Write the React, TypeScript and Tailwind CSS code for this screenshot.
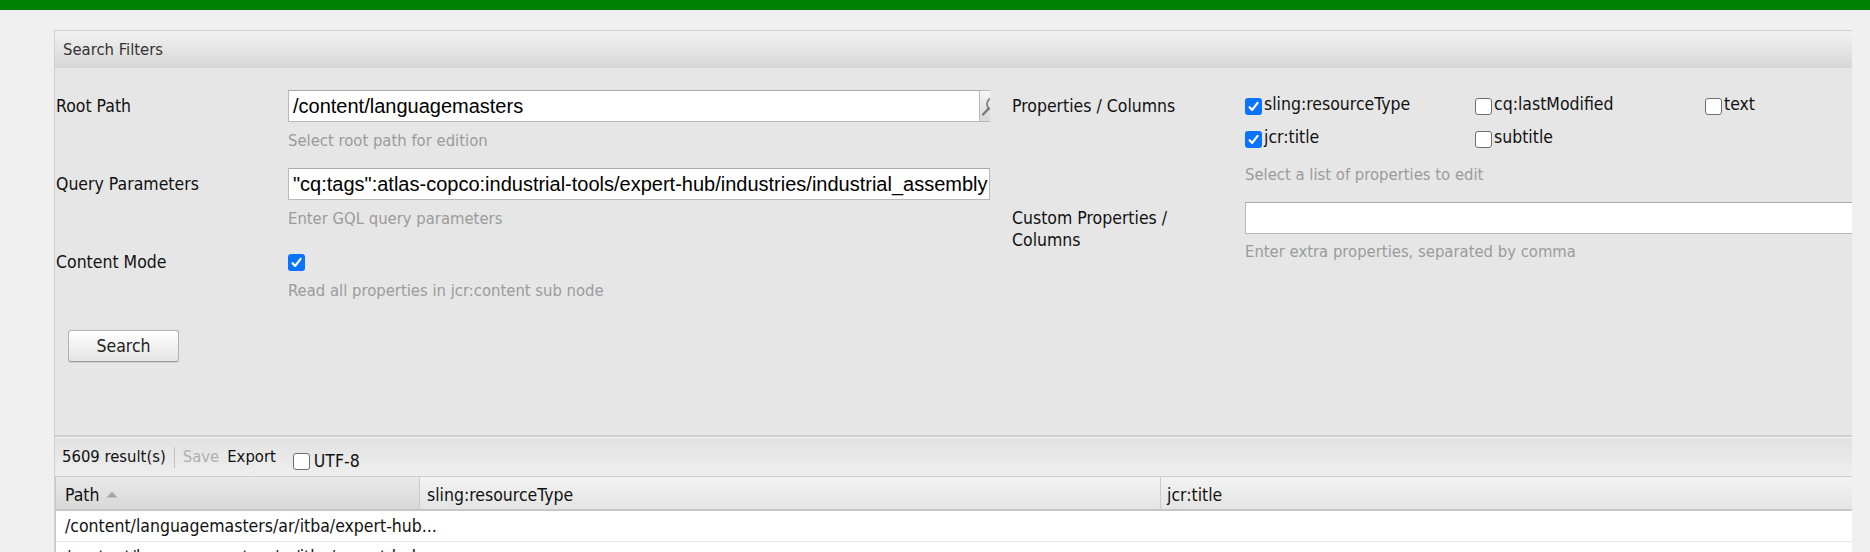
import React from "react";

// Tahoma-like UI face and Arial-like input face
const ui = "font-['DejaVu_Sans_Condensed','DejaVu_Sans',sans-serif]";
const arial = "font-['Liberation_Sans',Arial,sans-serif]";

function Box({ checked }: { checked?: boolean }) {
  if (checked) {
    return (
      <span className="flex h-[17px] w-[17px] shrink-0 items-center justify-center rounded-[3px] bg-[#0a74ff]">
        <svg width="13" height="13" viewBox="0 0 13 13">
          <path d="M2.6 7.2 L5.2 9.9 L10.6 2.8" fill="none" stroke="white" strokeWidth="2.2" strokeLinecap="round" strokeLinejoin="round" />
        </svg>
      </span>
    );
  }
  return <span className="block h-[17px] w-[17px] shrink-0 rounded-[3px] border border-[#6f6f6f] bg-white" />;
}

function Hint({ children, className = "" }: { children: React.ReactNode; className?: string }) {
  return <div className={`text-[16.5px] leading-[20px] text-[#9b9b9b] ${className}`}>{children}</div>;
}

function TextField({ value, trigger }: { value?: string; trigger?: boolean }) {
  return (
    <div className="flex h-[32px]">
      <div className={`flex-1 overflow-hidden whitespace-nowrap border border-[#b9b9b9] border-t-[#a9a9a9] bg-white pl-[4px] text-[20px] leading-[30px] text-black ${arial}`}>
        {value}
      </div>
      {trigger && (
        <div className="w-[10px] overflow-hidden border-y border-[#b9b9b9] bg-gradient-to-b from-[#f6f6f6] to-[#d9d9d9]">
          <svg width="10" height="30" viewBox="0 0 10 30">
            <circle cx="13" cy="13" r="6" fill="none" stroke="#8a8a8a" strokeWidth="2" />
            <path d="M8.6 17.6 L3 23.5" stroke="#7a7a7a" strokeWidth="2.4" strokeLinecap="round" />
          </svg>
        </div>
      )}
    </div>
  );
}

const props = [
  { name: "sling:resourceType", on: true },
  { name: "cq:lastModified", on: false },
  { name: "text", on: false },
  { name: "jcr:title", on: true },
  { name: "subtitle", on: false },
];

export default function App() {
  return (
    <div className={`h-[552px] w-full overflow-hidden bg-[#f0f0f0] ${ui}`}>
      <div className="h-[10px] bg-[#008000]" />
      <div className="pl-[54px] pr-[18px] pt-[20px]">
        <section className="overflow-hidden border-l border-t border-[#d0d0d0] bg-[#e6e6e6] text-[17.5px] text-[#111]">
          <header className="h-[37px] bg-gradient-to-b from-[#f2f2f2] to-[#d7d7d7] pl-[8px] text-[16.5px] leading-[37px] text-[#333]">
            Search Filters
          </header>

          <div className="flex pb-[73px]">
            {/* left column */}
            <div className="w-[935px] shrink-0 pt-[22px]">
              <div className="flex">
                <div className="w-[233px] pl-px leading-[32px]">Root Path</div>
                <div className="w-[702px]">
                  <TextField value="/content/languagemasters" trigger />
                  <Hint className="mt-[9px]">Select root path for edition</Hint>
                </div>
              </div>
              <div className="mt-[17px] flex">
                <div className="w-[233px] pl-px leading-[32px]">Query Parameters</div>
                <div className="w-[702px]">
                  <TextField value={'"cq:tags":atlas-copco:industrial-tools/expert-hub/industries/industrial_assembly'} />
                  <Hint className="mt-[9px]">Enter GQL query parameters</Hint>
                </div>
              </div>
              <div className="mt-[17px] flex">
                <div className="w-[233px] pl-px leading-[32px]">Content Mode</div>
                <div className="w-[702px]">
                  <div className="flex h-[32px] items-center">
                    <Box checked />
                  </div>
                  <Hint className="mt-[3px]">Read all properties in jcr:content sub node</Hint>
                </div>
              </div>
              <button className="ml-[13px] mt-[29px] h-[32px] w-[111px] rounded-[3px] border border-[#b0b0b0] border-b-[#9d9d9d] bg-gradient-to-b from-white to-[#e4e4e4] text-[17.5px] text-[#222] shadow-[0_1px_0_#cfcfcf]">
                Search
              </button>
            </div>

            {/* right column */}
            <div className="flex-1 pl-[22px] pt-[20px]">
              <div className="flex">
                <div className="w-[233px] shrink-0 pt-[2px] leading-[32px]">Properties / Columns</div>
                <div className="flex-1">
                  <div className="grid grid-cols-[230px_230px_230px]">
                    {props.map((p) => (
                      <div key={p.name} className="flex h-[33px] items-center">
                        <span className="mt-[4px] flex">
                          <Box checked={p.on} />
                        </span>
                        <span className="ml-[2px]">{p.name}</span>
                      </div>
                    ))}
                  </div>
                  <Hint className="mt-[11px]">Select a list of properties to edit</Hint>
                </div>
              </div>
              <div className="mt-[17px] flex">
                <div className="w-[233px] shrink-0 pt-[5px] leading-[22px]">
                  Custom Properties /<br />Columns
                </div>
                <div className="flex-1">
                  <div className="h-[32px] border border-r-0 border-[#b9b9b9] border-t-[#a9a9a9] bg-white" />
                  <Hint className="mt-[8px]">Enter extra properties, separated by comma</Hint>
                </div>
              </div>
            </div>
          </div>

          {/* results toolbar */}
          <div className="border-t-2 border-[#cdcdcd]">
            <div className="flex h-[40px] items-center border-b border-t border-b-[#cfcfcf] border-t-[#f5f5f5] bg-gradient-to-b from-[#e2e2e2] to-[#eeeeee] pl-[7px] text-[16.5px]">
              <span>5609 result(s)</span>
              <span className="mx-[8px] h-[21px] w-px bg-[#c4c4c4]" />
              <span className="text-[#b0b0b0]">Save</span>
              <span className="ml-[8px]">Export</span>
              <span className="ml-[17px] flex items-center pt-[8px]">
                <Box />
                <span className="ml-[4px] text-[17.5px]">UTF-8</span>
              </span>
            </div>
          </div>

          {/* results table */}
          <div className="border-l border-[#c8c8c8]">
            <div className="flex h-[34px] border-b-2 border-[#c6c6c6] bg-gradient-to-b from-[#f3f3f3] to-[#e4e4e4]">
              <div className="flex w-[364px] items-center border-r border-[#cbcbcb] bg-gradient-to-b from-[#e9e9e9] to-[#d8d8d8] pl-[9px] pt-[3px] leading-[30px]">
                Path
                <svg className="ml-[6px]" width="12" height="7" viewBox="0 0 12 7">
                  <path d="M0.5 6.5 L6 0.8 L11.5 6.5 Z" fill="#a6a6a6" />
                </svg>
              </div>
              <div className="w-[741px] border-r border-[#cbcbcb] pl-[7px] pt-[3px] leading-[30px]">sling:resourceType</div>
              <div className="flex-1 pl-[6px] pt-[3px] leading-[30px]">jcr:title</div>
            </div>
            <div className="h-[31px] border-b border-[#e7e7e7] bg-white pl-[9px] leading-[30px]">
              /content/languagemasters/ar/itba/expert-hub...
            </div>
            <div className="h-[31px] border-b border-[#e7e7e7] bg-white pl-[9px] leading-[30px]">
              /content/languagemasters/ar/itba/expert-hub...
            </div>
          </div>
        </section>
      </div>
    </div>
  );
}
